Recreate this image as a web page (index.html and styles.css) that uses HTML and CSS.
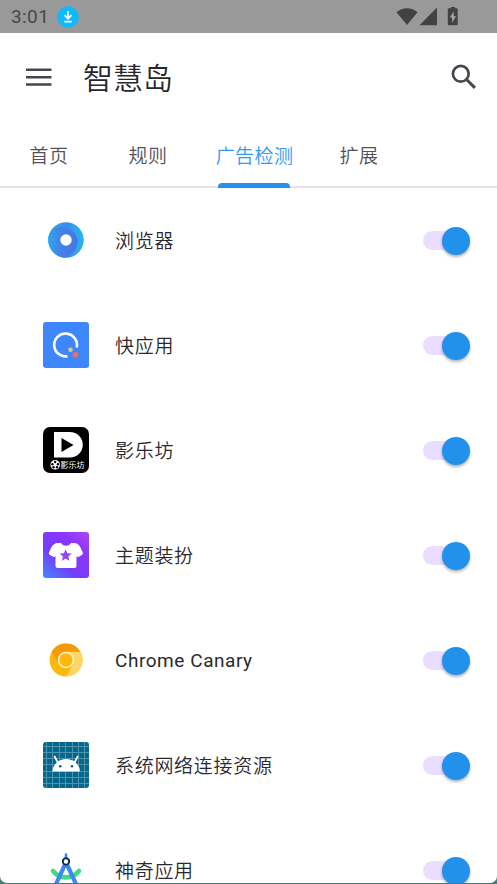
FILE: index.html
```
<!doctype html>
<html lang="zh-CN">
<head>
<meta charset="utf-8">
<title>智慧岛</title>
<link rel="stylesheet" href="styles.css">
</head>

<body>
<div class="screen">

<!-- status bar -->
<div class="status">
  <span class="clock">3:01</span>
  <svg class="download" width="22" height="22" viewBox="0 0 22 22">
    <circle cx="11" cy="11" r="10.700" fill="#0fb9fb"/>
    <path d="M11 5v7M7.500 9.200l3.500 3.500 3.500-3.500M7.300 15.600h7.400" fill="none" stroke="#fff" stroke-width="1.700"/>
  </svg>
  <svg class="signals" width="66" height="22" viewBox="0 0 66 22">
    <path d="M1.500 6.200C7.500.900 16.500.900 22.500 6.200L12 19z" fill="#424242"/>
    <path d="M42 1.500v17.800H24.500z" fill="#424242"/>
    <path d="M56 2.300V.900h4v1.400h1.700q1 0 1 1v14.900q0 1-1 1h-7.900q-1 0-1-1V3.300q0-1 1-1z" fill="#424242"/>
    <path d="M58.700 5.200l-3.800 6.300h2.200v5.200l4-6.500h-2.400z" fill="#a5a5a5"/>
  </svg>
</div>

<!-- toolbar -->
<div class="toolbar">
  <svg width="26" height="18" viewBox="0 0 26 18">
    <path d="M0 1.800h25.500M0 9.300h25.500M0 16.600h25.500" stroke="#49454f" stroke-width="2.500"/>
  </svg>
  <h1>智慧岛</h1>
  <svg width="26" height="26" viewBox="0 0 26 26">
    <circle cx="9.800" cy="9.800" r="7.900" fill="none" stroke="#49454f" stroke-width="2.700"/>
    <path d="M15.300 15.300l8.600 8.600" stroke="#49454f" stroke-width="3"/>
  </svg>
</div>

<div class="tabs">
  <div class="tab">首页</div>
  <div class="tab">规则</div>
  <div class="tab active">广告检测</div>
  <div class="tab">扩展</div>
</div>

<!-- installed apps -->
<div class="list">
  <div class="row">
    <svg class="icon" viewBox="0 0 46 46">
      <defs>
        <linearGradient id="ring" x1="0" y1="0" x2="1" y2="0"><stop offset="0" stop-color="#25b8f0"/><stop offset=".5" stop-color="#3b8cec"/><stop offset="1" stop-color="#25b8ec"/></linearGradient>
        <linearGradient id="swirl" x1="0" y1="0" x2="1" y2="0"><stop offset="0" stop-color="#2bb0ee"/><stop offset=".5" stop-color="#4480e6"/><stop offset="1" stop-color="#4776e3"/></linearGradient>
        <clipPath id="disc"><circle cx="23" cy="23" r="17.800"/></clipPath>
      </defs>
      <circle cx="23" cy="23" r="17.800" fill="url(#ring)"/>
      <path clip-path="url(#disc)" d="M2 16C10 8 22 8.500 28 13c7 5 9 13 3.500 21-3 4-7 6.300-11 7.500H2z" fill="url(#swirl)"/>
      <circle cx="23" cy="23" r="5.700" fill="#fff"/>
    </svg>
    <span class="name">浏览器</span>
    <span class="switch"></span>
  </div>

  <div class="row">
    <svg class="icon" viewBox="0 0 46 46">
      <rect width="46" height="46" rx="3" fill="#3d86fb"/>
      <path d="M24.500 34.200A11.400 11.400 0 1 1 33.700 25.500" fill="none" stroke="#fff" stroke-width="2.600"/>
      <circle cx="27.500" cy="27.800" r="2.300" fill="#dccb78"/>
      <circle cx="32.500" cy="32.800" r="2.900" fill="#f46c53"/>
    </svg>
    <span class="name">快应用</span>
    <span class="switch"></span>
  </div>

  <div class="row">
    <svg class="icon" viewBox="0 0 46 46">
      <rect width="46" height="46" rx="7" fill="#000"/>
      <path d="M11 5h16a12.800 12.800 0 0 1 0 25.600H11z" fill="#fff"/>
      <path d="M18.500 11v14l12-7z" fill="#000"/>
      <circle cx="12.200" cy="37.800" r="4.800" fill="#fff"/>
      <g fill="#000">
        <circle cx="12.200" cy="35" r="1.200"/><circle cx="9.400" cy="37.200" r="1.200"/><circle cx="15" cy="37.200" r="1.200"/>
        <circle cx="10.500" cy="40.300" r="1.200"/><circle cx="14" cy="40.300" r="1.200"/>
      </g>
      <text class="logo-text" x="17.500" y="41" textLength="24">影乐坊</text>
    </svg>
    <span class="name">影乐坊</span>
    <span class="switch"></span>
  </div>

  <div class="row">
    <svg class="icon" viewBox="0 0 46 46">
      <defs>
        <linearGradient id="theme" x1="0" y1="1" x2=".9" y2="0">
          <stop offset="0" stop-color="#3d8dff"/><stop offset=".38" stop-color="#753dfa"/>
          <stop offset=".75" stop-color="#8d36fa"/><stop offset="1" stop-color="#a544f5"/>
        </linearGradient>
      </defs>
      <rect width="46" height="46" rx="3" fill="url(#theme)"/>
      <path d="M15 11h3c2 3.600 8 3.600 10 0h3c3 0 5 1.500 6.500 4.500l2.300 5c.4 1-.2 2-1 2.500l-3 1.800c-1 .5-1.800 0-2.300-1V34q0 2-2 2h-17q-2 0-2-2V23.800c-.5 1-1.300 1.500-2.300 1L7 23c-.8-.5-1.400-1.500-1-2.500l2.300-5C9.800 12.500 12 11 15 11z" fill="#fff"/>
      <path d="M22.600 17.200l1.700 4.100 4.400.3-3.400 2.900 1.100 4.300-3.800-2.300-3.800 2.300 1.100-4.300-3.400-2.900 4.400-.3z" fill="#9148ec"/>
    </svg>
    <span class="name">主题装扮</span>
    <span class="switch"></span>
  </div>

  <div class="row">
    <svg class="icon" viewBox="0 0 46 46">
      <circle cx="23" cy="23" r="16.500" fill="#fdb90b"/>
      <path d="M23 14.700h14.300A16.500 16.500 0 0 1 23 39.500l7.200-12.300z" fill="#ffd663"/>
      <path d="M8.700 14.700A16.500 16.500 0 0 1 37.300 14.700H23l-7.200 12.500z" fill="#f49a08"/>
      <circle cx="23" cy="23" r="8.300" fill="#fff3cd"/>
      <circle cx="23" cy="23" r="6.700" fill="#fdb90b"/>
    </svg>
    <span class="name latin">Chrome Canary</span>
    <span class="switch"></span>
  </div>

  <div class="row">
    <svg class="icon" viewBox="0 0 46 46">
      <rect width="46" height="46" rx="3" fill="#04678b"/>
      <path d="M3.500 0v46M9.500 0v46M16.500 0v46M22.500 0v46M29.500 0v46M35.500 0v46M41.500 0v46M0 4.500h46M0 10.500h46M0 16.500h46M0 22.500h46M0 29.500h46M0 35.500h46M0 41.500h46" stroke="#4c93ab" stroke-width="1"/>
      <path d="M9.500 29.500a13.700 12.500 0 0 1 27.400 0z" fill="#fff"/>
      <path d="M14.800 20.500l-3.200-6M31.500 20.500l3.200-6" stroke="#fff" stroke-width="1.700" stroke-linecap="round"/>
      <circle cx="17.200" cy="24.200" r="1.300" fill="#04678b"/><circle cx="29" cy="24.200" r="1.300" fill="#04678b"/>
    </svg>
    <span class="name">系统网络连接资源</span>
    <span class="switch"></span>
  </div>

  <div class="row">
    <svg class="icon" viewBox="0 0 46 46">
      <path d="M10 24c7 8.500 19 8.500 26 0" fill="none" stroke="#3ddc84" stroke-width="4.600" stroke-linecap="round"/>
      <path d="M23 7.500v5" stroke="#4285f4" stroke-width="2.600" stroke-linecap="round"/>
      <path d="M20.500 15.500h5L37.500 42H33L23 20.500 13 42H8.500z" fill="#4285f4"/>
      <circle cx="23" cy="14.400" r="3.200" fill="#fff" stroke="#073042" stroke-width="1.900"/>
    </svg>
    <span class="name">神奇应用</span>
    <span class="switch"></span>
  </div>
</div>

</div>
</body>
</html>
```
FILE: styles.css
```
body {
  margin: 0;
  height: 884px;
  overflow: hidden;
  background: #427f7b;
  font-family: Roboto, "Noto Sans CJK SC", sans-serif;
}

.screen {
  height: 883px;
  overflow: hidden;
  background: #fff;
  border-radius: 0 0 7px 7px;
}

svg {
  display: block;
  flex: none;
}

.status {
  display: flex;
  align-items: center;
  box-sizing: border-box;
  height: 33px;
  padding: 0 36px 0 11px;
  background: #999;
}

.clock {
  width: 46px;
  color: #484848;
  font-size: 19px;
  letter-spacing: 0.4px;
  line-height: 33px;
}

.signals {
  margin-left: auto;
}

.toolbar {
  display: flex;
  align-items: center;
  box-sizing: border-box;
  height: 91px;
  padding: 0 20px 3px 26px;
}

h1 {
  flex: 1;
  margin: 0 0 0 31px;
  padding-top: 4px;
  color: #29272c;
  font-size: 30px;
  font-weight: 350;
  line-height: 40px;
}

.tabs {
  display: flex;
  box-sizing: border-box;
  height: 64px;
  border-bottom: 2px solid #e8e1e9;
}

.tab {
  width: 98px;
  color: #55515b;
  font-size: 19px;
  font-weight: 350;
  letter-spacing: 0.4px;
  line-height: 65px;
  text-align: center;
}

.tab:nth-child(2) {
  width: 100px;
}

.tab:last-child {
  width: 96px;
}

/* the marker lies over the line under the tabs */
.tab.active {
  position: relative;
  width: 113px;
  color: #2d9bf3;
}

.active::after {
  content: "";
  position: absolute;
  left: 20px;
  bottom: -2px;
  width: 72px;
  height: 5px;
  border-radius: 4px 4px 0 0;
  background: #2492ec;
}

.row {
  display: flex;
  align-items: center;
  box-sizing: border-box;
  height: 105px;
  padding: 0 27px 1px 43px;
}

.icon {
  width: 46px;
  height: 46px;
}

.name {
  flex: 1;
  margin-left: 26px;
  padding-top: 4px;
  color: #2b292e;
  font-size: 19px;
  font-weight: 350;
  letter-spacing: 0.7px;
  line-height: 28px;
}

.latin {
  padding-top: 2px;
  font-weight: 400;
  letter-spacing: 0.55px;
}

.logo-text {
  fill: #fff;
  font-size: 8px;
}

.switch {
  position: relative;
  width: 47px;
  height: 28px;
  margin-top: 1px;
}

.switch::before {
  content: "";
  display: block;
  width: 40px;
  height: 19px;
  margin-top: 4px;
  border-radius: 10px;
  background: #eaddff;
}

.switch::after {
  content: "";
  position: absolute;
  right: 0;
  top: 0;
  width: 28px;
  height: 28px;
  border-radius: 50%;
  background: #2191ec;
  box-shadow: 0 2px 3px rgba(0, 0, 0, 0.3);
}
```
